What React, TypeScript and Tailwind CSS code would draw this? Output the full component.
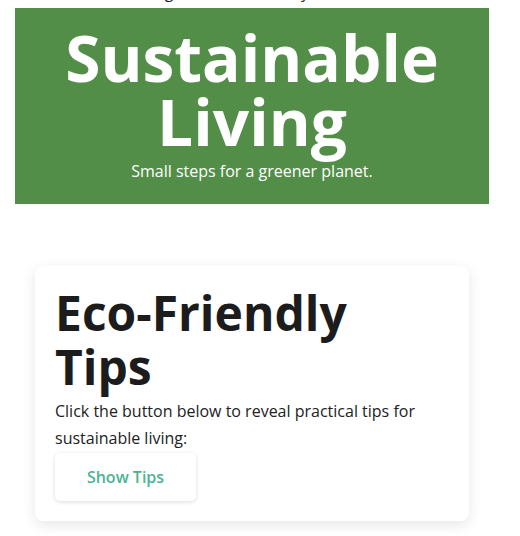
import React from "react";

export default function App() {
  return (
    <div className="min-h-[536px] bg-white pl-[15px] text-[#222]" style={{ fontFamily: '"Open Sans", sans-serif' }}>
      <div className="w-[474px]">
        <div className="h-[8px] overflow-hidden">
          <p className="-mt-[18px] pl-[55px] text-[16px] leading-[21px] text-[#222] whitespace-nowrap">
            Learn about green actions to try at home.
          </p>
        </div>
        <header className="bg-[#528e48] pt-[18px] pb-[19px] text-center text-white">
          <h1 className="text-[64px] font-bold leading-[64px]">Sustainable Living</h1>
          <p className="mt-[4px] text-[16px] leading-[1.7]">Small steps for a greener planet.</p>
        </header>
        <div className="px-[20px] pt-[62px]">
          <div className="rounded-lg bg-white p-[20px] shadow-[0_4px_14px_rgba(0,0,0,0.1)]">
            <h2 className="text-[48px] font-bold leading-[54px] text-[#1c1c1c]">Eco-Friendly Tips</h2>
            <p className="mt-[4px] text-[16px] leading-[1.7] text-[#222]">
              Click the button below to reveal practical tips for sustainable living:
            </p>
            <button className="h-[48px] w-[141px] rounded-[5px] bg-white text-[16px] font-semibold text-[#4eb394] shadow-[0_1px_4px_rgba(0,0,0,0.14)]">
              Show Tips
            </button>
          </div>
        </div>
      </div>
    </div>
  );
}
